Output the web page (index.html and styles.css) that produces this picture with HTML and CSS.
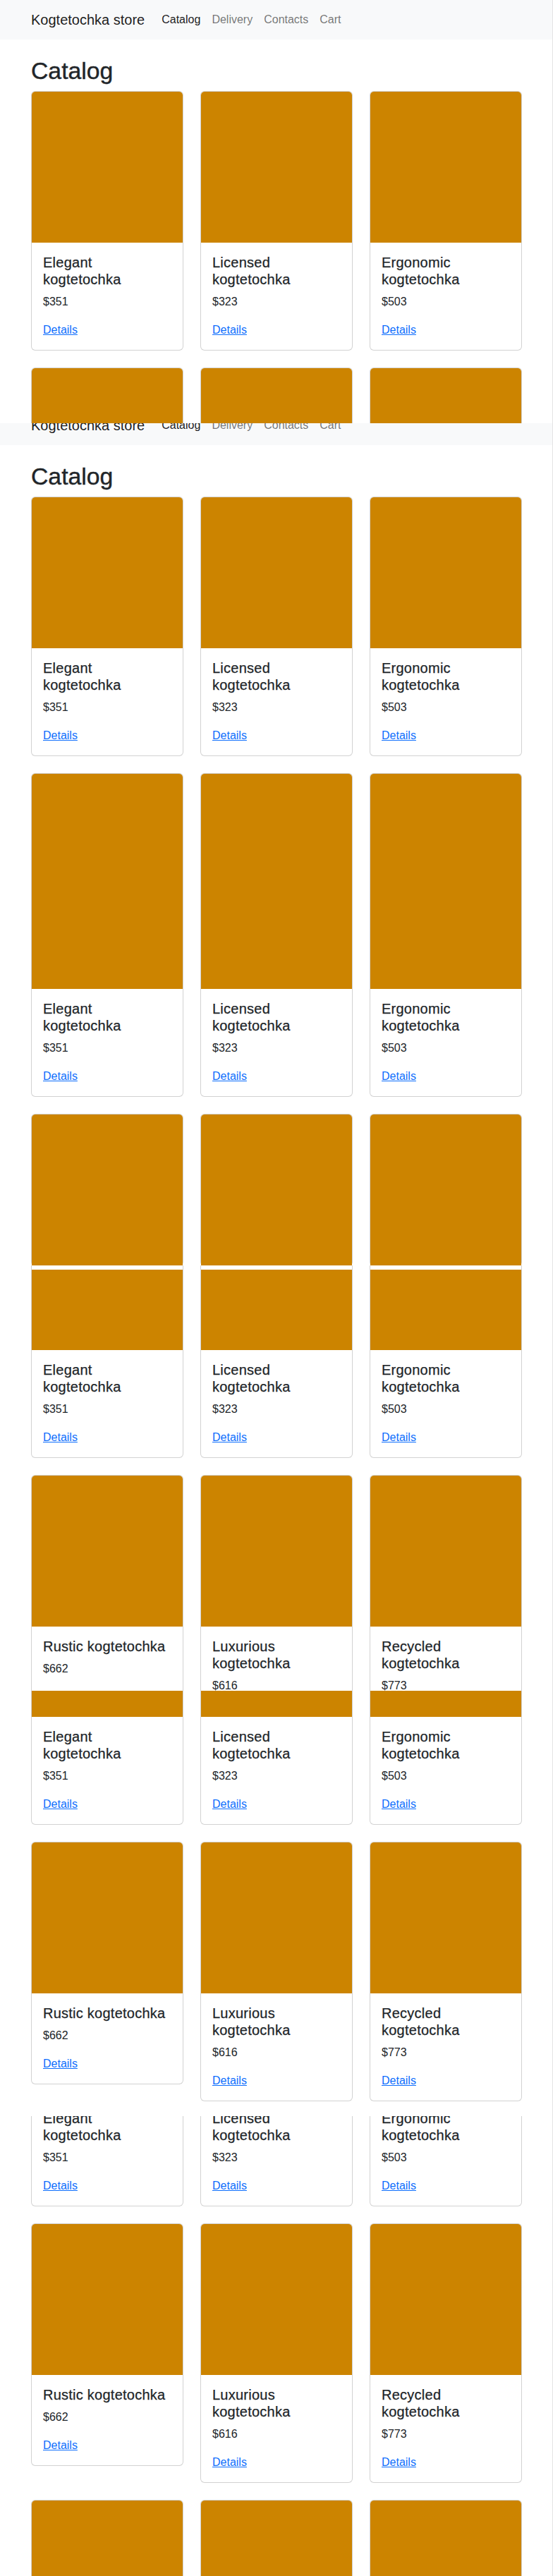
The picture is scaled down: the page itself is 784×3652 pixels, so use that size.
FILE: index.html
```html
<!DOCTYPE html>
<html lang="en">
<head>
<meta charset="utf-8">
<title>Kogtetochka store — Catalog</title>
<link rel="stylesheet" href="styles.css">
</head>
<body>
<div class="page">

  <!-- band 1 -->
  <section class="band band-1">
    <nav class="navbar">
      <div class="navbar-inner">
        <a class="brand" href="#">Kogtetochka store</a>
        <ul class="nav">
          <li><a class="nav-link nav-link--active" href="#">Catalog</a></li>
          <li><a class="nav-link" href="#">Delivery</a></li>
          <li><a class="nav-link" href="#">Contacts</a></li>
          <li><a class="nav-link" href="#">Cart</a></li>
        </ul>
      </div>
    </nav>
    <main class="container">
      <h1 class="page-title">Catalog</h1>
      <div class="grid">
        <div class="card"><div class="card-img"></div><div class="card-body"><h5 class="card-title">Elegant kogtetochka</h5><p class="card-price">$351</p><a class="card-link" href="#">Details</a></div></div>
        <div class="card"><div class="card-img"></div><div class="card-body"><h5 class="card-title">Licensed kogtetochka</h5><p class="card-price">$323</p><a class="card-link" href="#">Details</a></div></div>
        <div class="card"><div class="card-img"></div><div class="card-body"><h5 class="card-title">Ergonomic kogtetochka</h5><p class="card-price">$503</p><a class="card-link" href="#">Details</a></div></div>
        <div class="card"><div class="card-img"></div></div>
        <div class="card"><div class="card-img"></div></div>
        <div class="card"><div class="card-img"></div></div>
      </div>
    </main>
  </section>

  <!-- band 2 -->
  <section class="band band-2">
    <nav class="navbar navbar--shifted">
      <div class="navbar-inner">
        <a class="brand" href="#">Kogtetochka store</a>
        <ul class="nav">
          <li><a class="nav-link nav-link--active" href="#">Catalog</a></li>
          <li><a class="nav-link" href="#">Delivery</a></li>
          <li><a class="nav-link" href="#">Contacts</a></li>
          <li><a class="nav-link" href="#">Cart</a></li>
        </ul>
      </div>
    </nav>
    <main class="container">
      <h1 class="page-title">Catalog</h1>
      <div class="grid">
        <div class="card"><div class="card-img"></div><div class="card-body"><h5 class="card-title">Elegant kogtetochka</h5><p class="card-price">$351</p><a class="card-link" href="#">Details</a></div></div>
        <div class="card"><div class="card-img"></div><div class="card-body"><h5 class="card-title">Licensed kogtetochka</h5><p class="card-price">$323</p><a class="card-link" href="#">Details</a></div></div>
        <div class="card"><div class="card-img"></div><div class="card-body"><h5 class="card-title">Ergonomic kogtetochka</h5><p class="card-price">$503</p><a class="card-link" href="#">Details</a></div></div>

        <div class="card"><div class="card-img card-img--tall"></div><div class="card-body"><h5 class="card-title">Elegant kogtetochka</h5><p class="card-price">$351</p><a class="card-link" href="#">Details</a></div></div>
        <div class="card"><div class="card-img card-img--tall"></div><div class="card-body"><h5 class="card-title">Licensed kogtetochka</h5><p class="card-price">$323</p><a class="card-link" href="#">Details</a></div></div>
        <div class="card"><div class="card-img card-img--tall"></div><div class="card-body"><h5 class="card-title">Ergonomic kogtetochka</h5><p class="card-price">$503</p><a class="card-link" href="#">Details</a></div></div>

        <div class="card"><div class="card-img"></div></div>
        <div class="card"><div class="card-img"></div></div>
        <div class="card"><div class="card-img"></div></div>
      </div>
    </main>
  </section>

  <!-- band 3 -->
  <section class="band band-3">
    <div class="container">
      <div class="grid">
        <div class="card card--cont"><div class="card-gap"></div><div class="card-img card-img--114"></div><div class="card-body"><h5 class="card-title">Elegant kogtetochka</h5><p class="card-price">$351</p><a class="card-link" href="#">Details</a></div></div>
        <div class="card card--cont"><div class="card-gap"></div><div class="card-img card-img--114"></div><div class="card-body"><h5 class="card-title">Licensed kogtetochka</h5><p class="card-price">$323</p><a class="card-link" href="#">Details</a></div></div>
        <div class="card card--cont"><div class="card-gap"></div><div class="card-img card-img--114"></div><div class="card-body"><h5 class="card-title">Ergonomic kogtetochka</h5><p class="card-price">$503</p><a class="card-link" href="#">Details</a></div></div>

        <div class="card"><div class="card-img"></div><div class="card-body"><h5 class="card-title">Rustic kogtetochka</h5><p class="card-price">$662</p><a class="card-link" href="#">Details</a></div></div>
        <div class="card"><div class="card-img"></div><div class="card-body"><h5 class="card-title">Luxurious kogtetochka</h5><p class="card-price">$616</p><a class="card-link" href="#">Details</a></div></div>
        <div class="card"><div class="card-img"></div><div class="card-body"><h5 class="card-title">Recycled kogtetochka</h5><p class="card-price">$773</p><a class="card-link" href="#">Details</a></div></div>
      </div>
    </div>
  </section>

  <!-- band 4 -->
  <section class="band band-4">
    <div class="container">
      <div class="grid">
        <div class="card card--cont"><div class="card-img card-img--37"></div><div class="card-body"><h5 class="card-title">Elegant kogtetochka</h5><p class="card-price">$351</p><a class="card-link" href="#">Details</a></div></div>
        <div class="card card--cont"><div class="card-img card-img--37"></div><div class="card-body"><h5 class="card-title">Licensed kogtetochka</h5><p class="card-price">$323</p><a class="card-link" href="#">Details</a></div></div>
        <div class="card card--cont"><div class="card-img card-img--37"></div><div class="card-body"><h5 class="card-title">Ergonomic kogtetochka</h5><p class="card-price">$503</p><a class="card-link" href="#">Details</a></div></div>

        <div class="card"><div class="card-img"></div><div class="card-body"><h5 class="card-title">Rustic kogtetochka</h5><p class="card-price">$662</p><a class="card-link" href="#">Details</a></div></div>
        <div class="card"><div class="card-img"></div><div class="card-body"><h5 class="card-title">Luxurious kogtetochka</h5><p class="card-price">$616</p><a class="card-link" href="#">Details</a></div></div>
        <div class="card"><div class="card-img"></div><div class="card-body"><h5 class="card-title">Recycled kogtetochka</h5><p class="card-price">$773</p><a class="card-link" href="#">Details</a></div></div>
      </div>
    </div>
  </section>

  <!-- band 5 -->
  <section class="band band-5">
    <div class="container">
      <div class="grid">
        <div class="card card--cont"><div class="card-body card-body--cut"><h5 class="card-title">Elegant kogtetochka</h5><p class="card-price">$351</p><a class="card-link" href="#">Details</a></div></div>
        <div class="card card--cont"><div class="card-body card-body--cut"><h5 class="card-title">Licensed kogtetochka</h5><p class="card-price">$323</p><a class="card-link" href="#">Details</a></div></div>
        <div class="card card--cont"><div class="card-body card-body--cut"><h5 class="card-title">Ergonomic kogtetochka</h5><p class="card-price">$503</p><a class="card-link" href="#">Details</a></div></div>

        <div class="card"><div class="card-img"></div><div class="card-body"><h5 class="card-title">Rustic kogtetochka</h5><p class="card-price">$662</p><a class="card-link" href="#">Details</a></div></div>
        <div class="card"><div class="card-img"></div><div class="card-body"><h5 class="card-title">Luxurious kogtetochka</h5><p class="card-price">$616</p><a class="card-link" href="#">Details</a></div></div>
        <div class="card"><div class="card-img"></div><div class="card-body"><h5 class="card-title">Recycled kogtetochka</h5><p class="card-price">$773</p><a class="card-link" href="#">Details</a></div></div>

        <div class="card"><div class="card-img"></div></div>
        <div class="card"><div class="card-img"></div></div>
        <div class="card"><div class="card-img"></div></div>
      </div>
    </div>
  </section>

</div>
</body>
</html>
```

FILE: styles.css
```css
* {
  box-sizing: border-box;
}

html,
body {
  margin: 0;
  padding: 0;
  background: #fff;
}

body {
  font-family: "Liberation Sans", Arial, sans-serif;
  font-size: 16px;
  line-height: 1.5;
  color: #212529;
}

.page {
  width: 784px;
  border-right: 1px solid #e4e4e4;
}

.band {
  overflow: hidden;
}

.band-1 { height: 600px; }
.band-2 { height: 1194px; }
.band-3 { height: 603px; }
.band-4 { height: 603px; }
.band-5 { height: 652px; }

/* navbar */
.navbar {
  background: #f8f9fa;
  padding: 8px 0;
}

.navbar--shifted {
  margin-top: -25px;
}

.navbar-inner {
  width: 696px;
  margin-left: 44px;
  display: flex;
  align-items: center;
}

.brand {
  font-size: 20px;
  line-height: 30px;
  padding: 5px 0;
  margin-right: 16px;
  color: rgba(0, 0, 0, 0.9);
  text-decoration: none;
}

.nav {
  display: flex;
  list-style: none;
  margin: 0;
  padding: 0;
}

.nav-link {
  display: block;
  padding: 8px;
  line-height: 24px;
  color: rgba(0, 0, 0, 0.55);
  text-decoration: none;
}

.nav-link--active {
  color: rgba(0, 0, 0, 0.9);
}

/* content */
.container {
  width: 696px;
  margin-left: 44px;
}

.page-title {
  margin: 24px 0 8px;
  font-size: 33.76px;
  line-height: 41px;
  font-weight: 500;
  -webkit-text-stroke: 0.4px #212529;
}

.grid {
  display: grid;
  grid-template-columns: repeat(3, 216px);
  gap: 24px;
  align-items: start;
}

.card {
  display: flex;
  flex-direction: column;
  border: 1px solid rgba(0, 0, 0, 0.175);
  border-radius: 6px;
  background: #fff;
}

.card-img {
  height: 214px;
  background: #cc8400;
  border-radius: 5px 5px 0 0;
}

.card-img--tall { height: 305px; }
.card-img--114 { height: 114px; }
.card-img--37 { height: 37px; }

.card--cont {
  border-top: 0;
  border-radius: 0 0 6px 6px;
}

.card--cont .card-img {
  border-radius: 0;
}

.card-gap {
  height: 6px;
}

.card-body {
  padding: 16px;
}

.card-body--cut {
  margin-top: -25px;
}

.card-title {
  margin: 0 0 8px;
  font-size: 20px;
  line-height: 24px;
  font-weight: 500;
  letter-spacing: 0.25px;
  -webkit-text-stroke: 0.25px #212529;
}

.card-price {
  margin: 0 0 16px;
}

.card-link {
  color: #0d6efd;
}
```
